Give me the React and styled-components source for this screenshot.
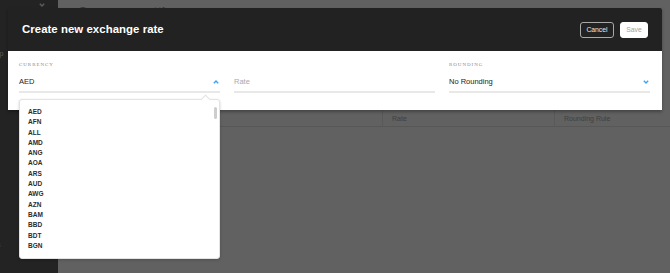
import React from "react";
import styled, { createGlobalStyle } from "styled-components";

const Global = createGlobalStyle`
  html, body { margin: 0; padding: 0; }
  body { font-family: "Liberation Sans", Arial, sans-serif; background: #616161; }
  * { box-sizing: border-box; }
`;

const Page = styled.div`
  position: relative;
  display: flex;
  width: 670px;
  height: 273px;
  overflow: hidden;
`;

const Sidebar = styled.nav`
  width: 58px;
  flex: none;
  background: #232323;
  display: flex;
  flex-direction: column;
  align-items: flex-start;
  overflow: hidden;
`;

const SideToggle = styled.div`
  align-self: flex-end;
  margin: 3px 12px 0 0;
  height: 6px;
  display: flex;
`;

const NavLabel = styled.div`
  font-size: 7px;
  color: #5a5a5a;
  white-space: nowrap;
  line-height: 8px;
  margin-left: ${(p) => p.$shift}px;
  margin-top: ${(p) => p.$top}px;
`;

const Main = styled.main`
  flex: 1;
  background: #616161;
  display: flex;
  flex-direction: column;
`;

const PageHead = styled.div`
  height: 110px;
  padding: 4px 0 0 20px;
`;

const PageTitle = styled.h1`
  margin: 0;
  font-size: 13px;
  font-weight: 700;
  color: #3c3c3c;
  line-height: 16px;
`;

const TableHead = styled.div`
  display: grid;
  grid-template-columns: 324px 172px 1fr;
  height: 17px;
  border-bottom: 1px solid #575757;
`;

const HeadCell = styled.div`
  font-size: 7px;
  color: #404040;
  padding: 5px 0 0 9px;
  border-left: ${(p) => (p.$first ? "none" : "1px solid #595959")};
`;

const Modal = styled.div`
  position: absolute;
  top: 8px;
  left: 8px;
  width: 654px;
  box-shadow: 0 2px 3px rgba(0, 0, 0, 0.3);
`;

const ModalHeader = styled.header`
  height: 43px;
  background: #222222;
  display: flex;
  align-items: center;
  justify-content: space-between;
  padding: 0 14px;
  border-radius: 2px 2px 0 0;
`;

const ModalTitle = styled.h2`
  margin: 0 0 1px 0;
  font-size: 11.4px;
  font-weight: 700;
  color: #ffffff;
  letter-spacing: 0.05px;
`;

const Actions = styled.div`
  display: flex;
  gap: 6px;
  align-items: center;
`;

const Button = styled.button`
  height: 16px;
  padding: 0;
  border-radius: 3px;
  font-family: "Liberation Sans", Arial, sans-serif;
  font-size: 6.8px;
  line-height: 14px;
  text-align: center;
  cursor: pointer;
  border: 1px solid ${(p) => (p.$primary ? "#ffffff" : "#a8a8a8")};
  background: ${(p) => (p.$primary ? "#ffffff" : "transparent")};
  color: ${(p) => (p.$primary ? "#a3a3a3" : "#e6e6e6")};
  width: ${(p) => (p.$primary ? "28px" : "34px")};
`;

const ModalBody = styled.div`
  background: #ffffff;
  padding: 10px 12px 17px 11px;
  display: grid;
  grid-template-columns: 201px 201px 201px;
  gap: 14px;
`;

const Field = styled.div`
  position: relative;
  display: flex;
  flex-direction: column;
`;

const Label = styled.div`
  font-family: "Liberation Serif", "Times New Roman", serif;
  font-size: 5px;
  letter-spacing: 0.95px;
  color: #8a8a8a;
  line-height: 7px;
  height: 7px;
  text-transform: uppercase;
`;

const InputRow = styled.div`
  margin-top: 5px;
  height: 20px;
  border-bottom: 2px solid #e8e8e8;
  display: flex;
  align-items: center;
  justify-content: space-between;
  padding-bottom: 1px;
`;

const Value = styled.span`
  font-size: 7.5px;
  color: ${(p) => (p.$placeholder ? "#a9a9a9" : "#222222")};
`;

const Chevron = styled.svg`
  width: 6px;
  height: 4px;
  margin-right: 1px;
`;

const Dropdown = styled.div`
  position: absolute;
  top: 38px;
  left: 0;
  width: 201px;
  height: 160px;
  background: #ffffff;
  border: 1px solid #e3e3e3;
  border-radius: 3px;
  box-shadow: 0 1px 3px rgba(0, 0, 0, 0.18);
  padding: 7px 0 0 8px;
  z-index: 2;
`;

const Caret = styled.div`
  position: absolute;
  top: -4px;
  right: 10px;
  width: 7px;
  height: 7px;
  background: #ffffff;
  border-left: 1px solid #e3e3e3;
  border-top: 1px solid #e3e3e3;
  transform: rotate(45deg);
`;

const ScrollThumb = styled.div`
  position: absolute;
  top: 7px;
  right: 2px;
  width: 3px;
  height: 12px;
  border-radius: 2px;
  background: #cdcdcd;
`;

const Option = styled.div`
  font-size: 6.5px;
  font-weight: 700;
  color: #2c2c2c;
  height: 10.3px;
  line-height: 10.3px;
`;

const ChevronUp = () => (
  <Chevron viewBox="0 0 6 4">
    <path d="M0.8 3.2 L3 1 L5.2 3.2" fill="none" stroke="#3ba3f4" strokeWidth="1.4" />
  </Chevron>
);

const ChevronDown = ({ color = "#3ba3f4" }) => (
  <Chevron viewBox="0 0 6 4">
    <path d="M0.8 0.8 L3 3 L5.2 0.8" fill="none" stroke={color} strokeWidth="1.4" />
  </Chevron>
);

const currencies = ["AED", "AFN", "ALL", "AMD", "ANG", "AOA", "ARS", "AUD", "AWG", "AZN", "BAM", "BBD", "BDT", "BGN"];

export default function App() {
  return (
    <>
      <Global />
      <Page>
        <Sidebar>
          <SideToggle>
            <ChevronDown color="#5c5c5c" />
          </SideToggle>
          <NavLabel $shift={-13} $top={41}>Shop</NavLabel>
          <NavLabel $shift={-26} $top={150}>Account</NavLabel>
          <NavLabel $shift={-24} $top={25}>Reports</NavLabel>
        </Sidebar>
        <Main>
          <PageHead>
            <PageTitle>Currency settings</PageTitle>
          </PageHead>
          <TableHead>
            <HeadCell $first>Currency</HeadCell>
            <HeadCell>Rate</HeadCell>
            <HeadCell>Rounding Rule</HeadCell>
          </TableHead>
        </Main>

        <Modal>
          <ModalHeader>
            <ModalTitle>Create new exchange rate</ModalTitle>
            <Actions>
              <Button>Cancel</Button>
              <Button $primary>Save</Button>
            </Actions>
          </ModalHeader>
          <ModalBody>
            <Field>
              <Label>Currency</Label>
              <InputRow>
                <Value>AED</Value>
                <ChevronUp />
              </InputRow>
              <Dropdown>
                <Caret />
                <ScrollThumb />
                {currencies.map((c) => (
                  <Option key={c}>{c}</Option>
                ))}
              </Dropdown>
            </Field>
            <Field>
              <Label>&nbsp;</Label>
              <InputRow>
                <Value $placeholder>Rate</Value>
              </InputRow>
            </Field>
            <Field>
              <Label>Rounding</Label>
              <InputRow>
                <Value>No Rounding</Value>
                <ChevronDown />
              </InputRow>
            </Field>
          </ModalBody>
        </Modal>
      </Page>
    </>
  );
}
